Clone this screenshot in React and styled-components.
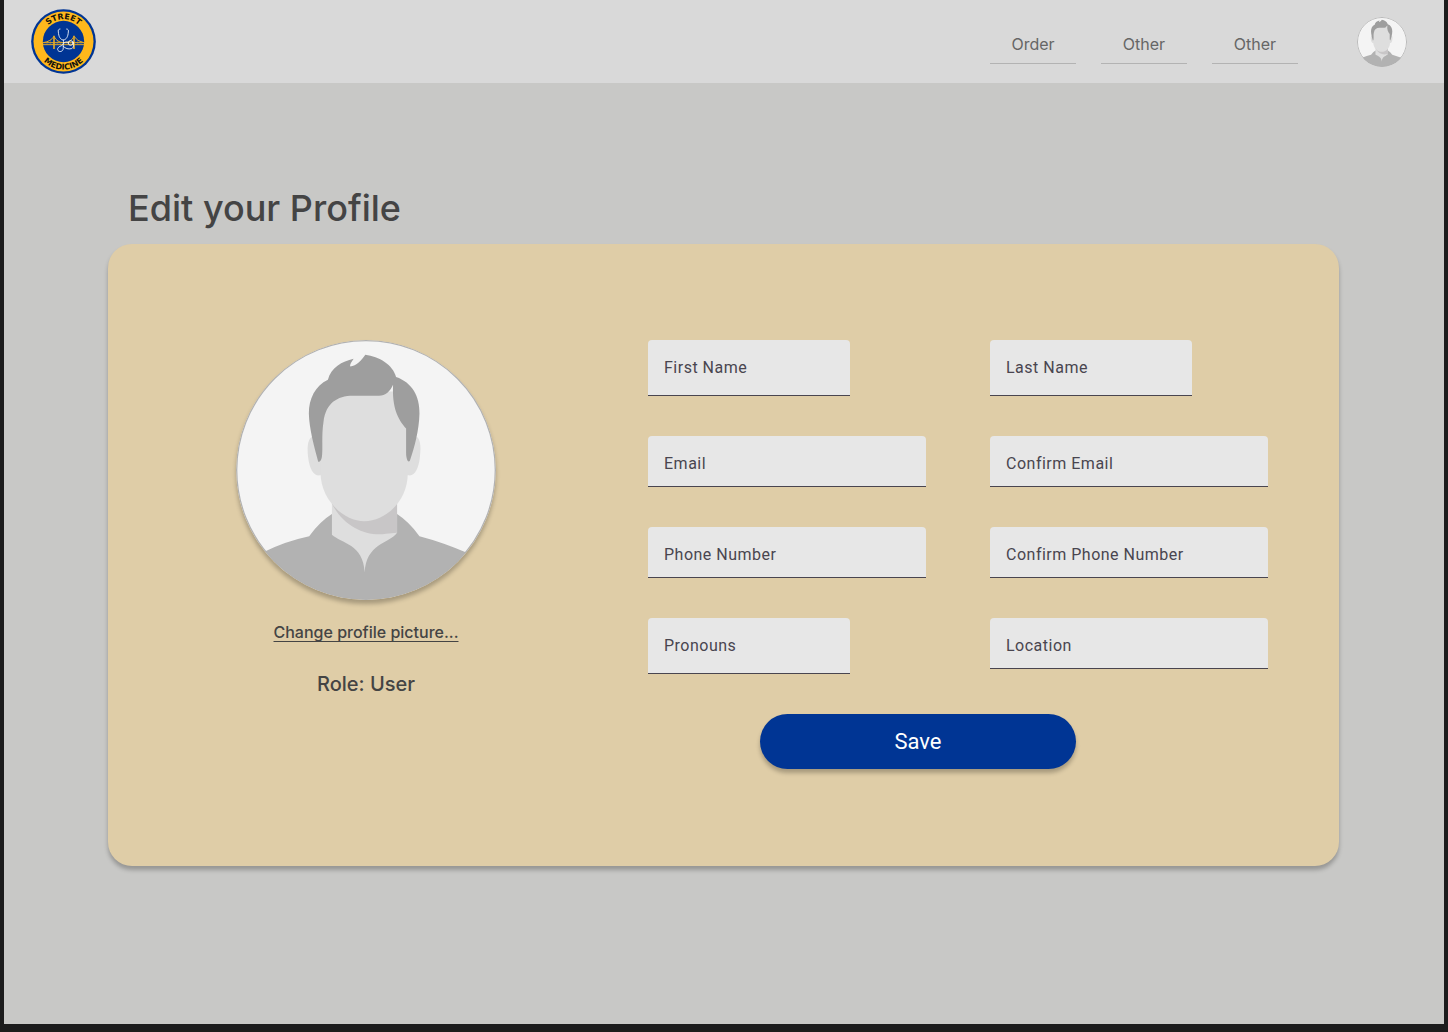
import React from "react";
import styled, { createGlobalStyle } from "styled-components";

const GlobalStyle = createGlobalStyle`
  *, *::before, *::after { box-sizing: border-box; }
  body {
    margin: 0;
    background: #1c1c1c;
    color: #444444;
    font-family: Inter, "Liberation Sans", sans-serif;
  }
`;

const shadow = "0 4px 4px rgba(0, 0, 0, 0.25)";

const Page = styled.div`
  min-height: calc(100vh - 8px);
  margin: 0 4px 8px;
  background: #c8c8c6;
`;

const Header = styled.header`
  display: flex;
  align-items: center;
  justify-content: space-between;
  height: 83px;
  padding: 0 37px 0 27px;
  background: #d9d9d9;
`;

const LogoLink = styled.a`
  display: block;
  width: 65px;
  height: 65px;

  svg { display: block; width: 100%; height: 100%; }
`;

const HeaderRight = styled.div`
  display: flex;
  align-items: center;
  gap: 59px;
`;

const Nav = styled.nav`
  display: flex;
  gap: 25px;
  padding-top: 5px;
`;

const NavLink = styled.a`
  width: 86px;
  padding: 8px 0;
  border-bottom: 1px solid #b3b3b3;
  color: #666666;
  font-size: 16px;
  line-height: 22px;
  text-align: center;
  text-decoration: none;
`;

const ProfileButton = styled.button`
  width: 50px;
  height: 50px;
  padding: 0;
  border: 0;
  border-radius: 50%;
  background: none;
  cursor: pointer;
`;

const AvatarImage = styled.svg`
  display: block;
  width: ${(p) => p.$size}px;
  height: ${(p) => p.$size}px;
  border-radius: 50%;
  box-shadow: ${(p) => (p.$raised ? shadow : "none")};
`;

const Main = styled.main`
  padding: 101px 105px 158px 104px;
`;

const Title = styled.h1`
  margin: 0 0 12px 20px;
  font-size: 36px;
  line-height: 48px;
  font-weight: 500;
`;

const Card = styled.section`
  display: flex;
  flex-wrap: wrap;
  align-items: flex-start;
  justify-content: space-between;
  row-gap: 40px;
  padding: 96px 71px 97px 128px;
  border-radius: 24px;
  background: #dfcda7;
  box-shadow: ${shadow};
`;

const Summary = styled.div`
  display: flex;
  flex-direction: column;
  align-items: center;
  width: 260px;
`;

const ChangeLink = styled.a`
  margin-top: 20px;
  color: inherit;
  font-size: 16px;
  line-height: 24px;
  font-weight: 500;
  text-underline-offset: 3px;
`;

const Role = styled.p`
  margin: 26px 0 0;
  font-size: 20px;
  line-height: 28px;
  font-weight: 500;
`;

const Form = styled.form`
  width: 620px;
  font-family: Roboto, "Liberation Sans", sans-serif;
`;

const Fields = styled.div`
  display: grid;
  grid-template-columns: 1fr 1fr;
  gap: 40px 64px;
  align-items: start;
`;

const FieldBox = styled.div`
  position: relative;
  width: ${(p) => (p.$short ? "202px" : "100%")};
  height: ${(p) => (p.$short ? "56px" : "51px")};
`;

const FieldInput = styled.input`
  display: block;
  width: 100%;
  height: 100%;
  padding: 16px 16px 0;
  border: 0;
  border-bottom: 1px solid #49454f;
  border-radius: 4px 4px 0 0;
  background: #e7e7e7;
  color: #1d1b20;
  font: inherit;
  font-size: 16px;
  outline: none;

  &:focus { border-bottom-color: #003594; }
`;

const FieldLabel = styled.label`
  position: absolute;
  top: 16px;
  left: 16px;
  color: #49454f;
  font-size: 16px;
  line-height: 24px;
  letter-spacing: 0.5px;
  pointer-events: none;

  ${FieldInput}:focus + &,
  ${FieldInput}:not(:placeholder-shown) + & {
    top: 4px;
    font-size: 12px;
    line-height: 16px;
  }
`;

const SaveButton = styled.button`
  display: block;
  width: 316px;
  height: 55px;
  margin: 40px 0 0 112px;
  padding: 0;
  border: 0;
  border-radius: 28px;
  background: #003594;
  box-shadow: ${shadow};
  color: #ffffff;
  font: inherit;
  font-size: 22px;
  line-height: 28px;
  cursor: pointer;
`;

const fields = [
  { id: "firstName", label: "First Name", short: true },
  { id: "lastName", label: "Last Name", short: true },
  { id: "email", label: "Email", type: "email" },
  { id: "confirmEmail", label: "Confirm Email", type: "email" },
  { id: "phone", label: "Phone Number", type: "tel" },
  { id: "confirmPhone", label: "Confirm Phone Number", type: "tel" },
  { id: "pronouns", label: "Pronouns", short: true },
  { id: "location", label: "Location" },
];

function Field({ id, label, type = "text", short }) {
  return (
    <FieldBox $short={short}>
      <FieldInput id={id} name={id} type={type} placeholder=" " />
      <FieldLabel htmlFor={id}>{label}</FieldLabel>
    </FieldBox>
  );
}

function Logo() {
  return (
    <svg viewBox="0 0 195 195" aria-hidden="true">
      <circle cx="97.5" cy="97.5" r="97" fill="#003594" />
      <circle cx="97.5" cy="97.5" r="90" fill="#ffb81c" />
      <circle cx="97.5" cy="97.5" r="62" fill="#003594" />
      <defs>
        <path id="logo-top" d="M30.5 97.5a67 67 0 0 1 134 0" />
        <path id="logo-bottom" d="M13.5 97.5a84 84 0 0 0 168 0" />
      </defs>
      <g fill="#15130c" fontFamily="'DejaVu Sans', sans-serif" fontWeight="700" fontSize="24" textAnchor="middle">
        <text><textPath href="#logo-top" startOffset="50%">STREET</textPath></text>
        <text><textPath href="#logo-bottom" startOffset="50%">MEDICINE</textPath></text>
      </g>
      <g fill="none" stroke="#e0a928">
        <path d="M36 101h123M36 107h123" strokeWidth="3" />
        <path d="M69 80v40M129 80v40" strokeWidth="5" />
        <path d="M37 101Q60 97 69 82Q78 101 99 101Q120 101 129 82Q138 97 158 101" strokeWidth="3" />
        <path d="M48 98v9M58 93v14M79 94v13M89 99v8M109 99v8M119 94v13M140 93v14M150 98v9" strokeWidth="1" />
      </g>
      <g fill="none" stroke="#ffffff" strokeWidth="2.5" strokeLinecap="round">
        <path d="M87 60c-5 0-6 4-5 9c1 14 6 23 15 24c9-1 14-10 15-24c1-5 0-9-5-9" />
        <path d="M97 93c2 8 0 13-5 17c-8 2-13 7-12 12c2 8 13 7 16 0c3-8-2-14 2-19c3-4 9-5 13-3" />
        <path d="M97 112c6 7 15 9 24 7c8-2 8-16 5-21" />
        <circle cx="119" cy="102" r="7" />
      </g>
    </svg>
  );
}

function Avatar({ size, raised, title }) {
  const clip = `avatar-clip-${size}`;
  return (
    <AvatarImage viewBox="31 31 778 778" $size={size} $raised={raised} role="img" aria-label={title}>
      <clipPath id={clip}><circle cx="420" cy="420" r="388" /></clipPath>
      <g clipPath={`url(#${clip})`}>
        <rect x="30" y="30" width="780" height="780" fill="#f4f4f4" />
        <path fill="#b2b2b2" d="M30 810V702Q72 684 119 663Q180 633 250 618Q282 574 319 551H512Q549 575 580 618Q652 637 720 667L810 705V810Z" />
        <path fill="#dedede" d="M318 505V614C345 639 413 642 416 727C420 640 489 641 513 608V505Z" />
        <path fill="#c8c6c7" d="M318 520C352 590 422 620 480 611L513 608V505Z" />
        <path fill="#dedede" d="M256 322C244 333 244 357 247 383C251 417 264 439 283 436H547C566 440 577 415 581 385C584 359 585 334 574 322Z" />
        <path fill="#dedede" d="M285 185H545V430C545 515 477 573 415 573C353 573 285 510 284 430Z" />
        <path fill="#9e9e9e" d="M277 395C264 347 250 296 249 251C249 207 268 168 306 150C315 113 348 95 383 87C376 97 371 106 373 110C391 109 407 91 418 75C459 80 501 105 510 142C558 158 581 200 580 251C579 300 565 354 551 393C544 399 540 382 540 369V296C515 267 498 235 501 165C493 184 478 198 459 198H381C333 198 300 221 293 275C286 320 292 357 288 381C286 391 282 397 277 395Z" />
      </g>
      <circle cx="420" cy="420" r={size < 100 ? 382 : 387} fill="none" stroke="#b2b2b2" strokeWidth={size < 100 ? 14 : 4} />
    </AvatarImage>
  );
}

export default function App() {
  return (
    <>
      <GlobalStyle />
      <Page>
        <Header>
          <LogoLink href="#home" aria-label="Street Medicine"><Logo /></LogoLink>
          <HeaderRight>
            <Nav>
              <NavLink href="#order">Order</NavLink>
              <NavLink href="#other">Other</NavLink>
              <NavLink href="#other-2">Other</NavLink>
            </Nav>
            <ProfileButton type="button" aria-label="Profile"><Avatar size={50} /></ProfileButton>
          </HeaderRight>
        </Header>
        <Main>
          <Title>Edit your Profile</Title>
          <Card>
            <Summary>
              <Avatar size={260} raised title="Profile picture" />
              <ChangeLink href="#picture">Change profile picture...</ChangeLink>
              <Role>Role: User</Role>
            </Summary>
            <Form onSubmit={(e) => e.preventDefault()}>
              <Fields>
                {fields.map((f) => <Field key={f.id} {...f} />)}
              </Fields>
              <SaveButton type="submit">Save</SaveButton>
            </Form>
          </Card>
        </Main>
      </Page>
    </>
  );
}
